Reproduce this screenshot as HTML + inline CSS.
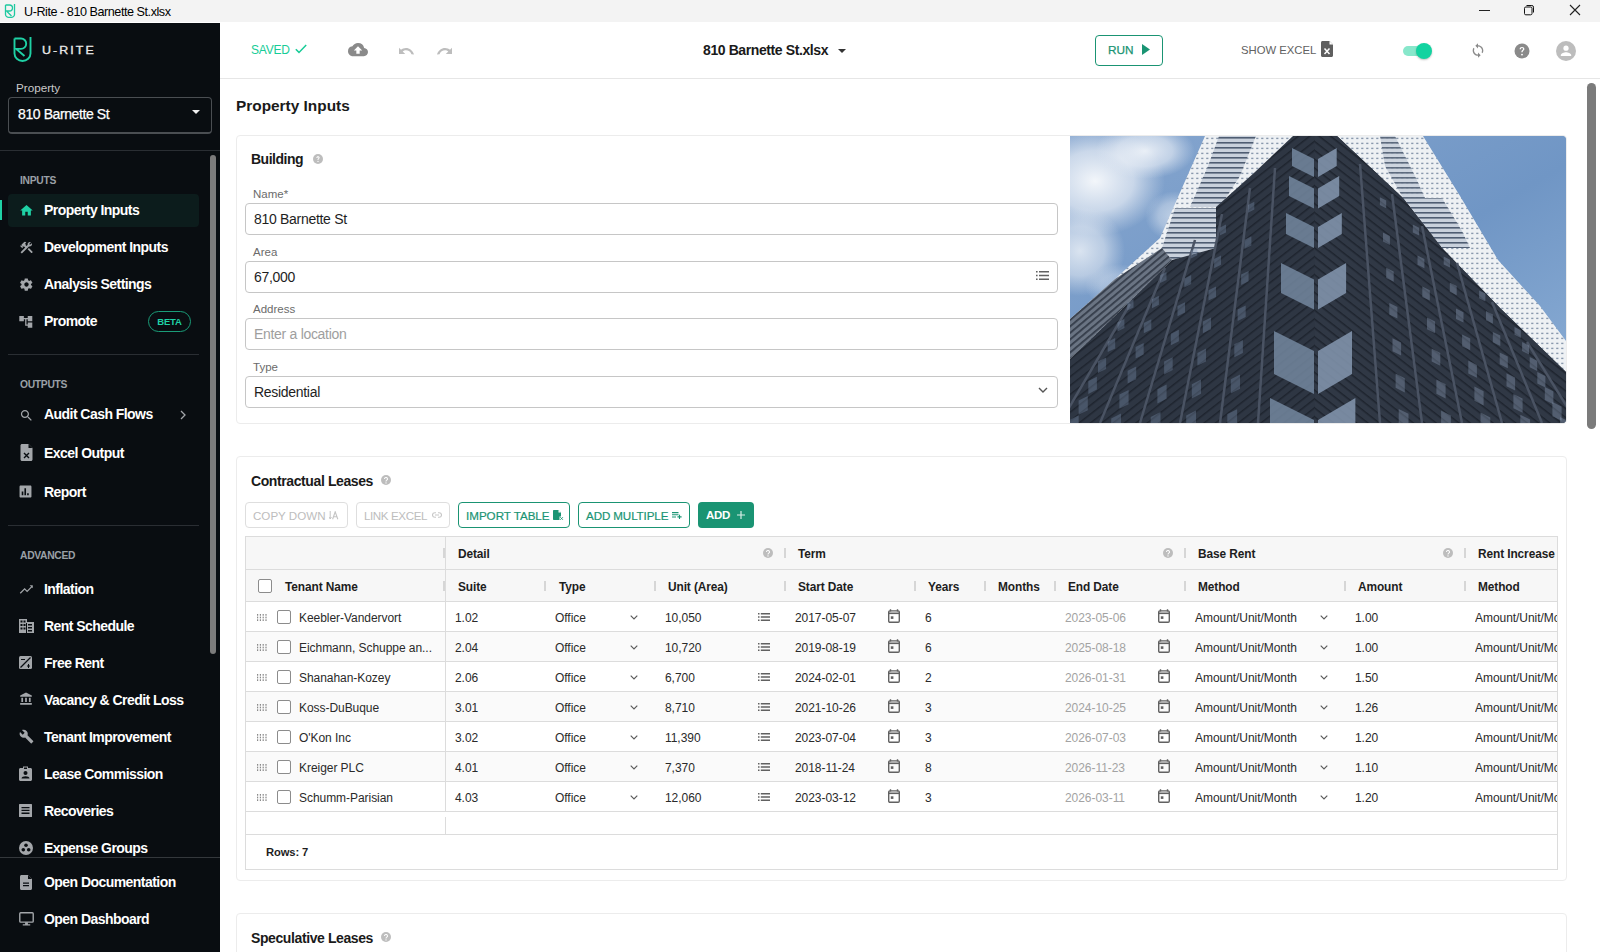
<!DOCTYPE html>
<html><head><meta charset="utf-8">
<style>
*{box-sizing:border-box;margin:0;padding:0}
html,body{width:1600px;height:952px;overflow:hidden;background:#fff;font-family:"Liberation Sans",sans-serif;color:#1e1e1e}
.abs{position:absolute}
#title{position:absolute;left:0;top:0;width:1600px;height:22px;background:#f3f3f3}
#title .t{position:absolute;left:24px;top:5px;font-size:12.6px;line-height:14px;color:#000;letter-spacing:-0.45px}
#side{position:absolute;left:0;top:23px;width:220px;height:929px;background:#090d11;overflow:hidden}
#main{position:absolute;left:220px;top:22px;width:1380px;height:930px;background:#fff;overflow:hidden}
.nav{position:absolute;left:44px;font-size:14px;line-height:16px;font-weight:bold;color:#fff;white-space:nowrap;letter-spacing:-0.55px;margin-top:0px}
.ico{position:absolute;left:19px;width:15px;height:15px}
.sec{position:absolute;left:20px;font-size:10.3px;line-height:12px;color:#9aa0a6;font-weight:bold;letter-spacing:-0.3px}
.lbl{position:absolute;left:253px;font-size:11.5px;line-height:13px;color:#6b6b6b}
.inp{position:absolute;left:245px;width:813px;height:32px;border:1px solid #c6c6c6;border-radius:4px}
.itx{position:absolute;left:254px;font-size:14px;line-height:16px;color:#1e1e1e;letter-spacing:-0.3px}
.btn{position:absolute;top:502px;height:26px;border:1px solid;border-radius:4px;font-size:11.6px;line-height:25px;padding-left:7px;letter-spacing:0px;white-space:nowrap}
.hl{position:absolute;left:245px;width:1312px;height:1px;background:#dcdcdc}
.rh{position:absolute;width:2px;height:10px;background:#d6d6d6}
.th{position:absolute;font-size:11.9px;line-height:13px;font-weight:bold;color:#1e1e1e;letter-spacing:-0.1px;white-space:nowrap}
.td{position:absolute;font-size:12px;line-height:13px;color:#2a2a2a;letter-spacing:-0.05px;white-space:nowrap}
.cb{position:absolute;width:14px;height:14px;border:1.5px solid #8c8c8c;border-radius:2px;background:#fff}
.div{position:absolute;height:1px;background:#2a2e33}
</style></head><body>
<svg width="0" height="0" style="position:absolute">
<defs>
<g id="qm"><circle cx="8" cy="8" r="8" fill="#bdbdbd"/><path d="M5.6 6.3A2.4 2.3 0 1 1 9.2 8.2C8.3 8.7 8 9.1 8 10.2" fill="none" stroke="#fff" stroke-width="1.7"/><circle cx="8" cy="12.6" r="1.1" fill="#fff"/></g>
<g id="dh" fill="#8a8a8a"><rect x="0" y="0" width="1.2" height="1.7"/><rect x="2.8" y="0" width="1.2" height="1.7"/><rect x="5.6" y="0" width="1.2" height="1.7"/><rect x="8.4" y="0" width="1.2" height="1.7"/><rect x="0" y="2.65" width="1.2" height="1.7"/><rect x="2.8" y="2.65" width="1.2" height="1.7"/><rect x="5.6" y="2.65" width="1.2" height="1.7"/><rect x="8.4" y="2.65" width="1.2" height="1.7"/><rect x="0" y="5.3" width="1.2" height="1.7"/><rect x="2.8" y="5.3" width="1.2" height="1.7"/><rect x="5.6" y="5.3" width="1.2" height="1.7"/><rect x="8.4" y="5.3" width="1.2" height="1.7"/></g>
<g id="chev"><path d="M.7.7L4 4 7.3.7" fill="none" stroke="#5a5a5a" stroke-width="1.15"/></g>
<g id="lst" fill="#616161"><path d="M0 0h1.5v1.4H0zM0 3.3h1.5v1.4H0zM0 6.6h1.5v1.4H0zM2.8 0H12v1.4H2.8zM2.8 3.3H12v1.4H2.8zM2.8 6.6H12v1.4H2.8z"/></g>
<g id="cal"><path d="M2.5 0.3v2.2M9.5 0.3v2.2" stroke="#616161" stroke-width="1.4"/><rect x="0.7" y="1.9" width="10.6" height="11.4" rx="1.2" fill="none" stroke="#616161" stroke-width="1.4"/><path d="M0.7 3.5h10.6v1.6H0.7z" fill="#616161"/><rect x="2.8" y="7.3" width="2.6" height="2.6" fill="#616161"/></g>
</defs></svg>

<div id="title">
  <svg class="abs" style="left:4px;top:3px" width="12" height="15" viewBox="0 0 12 15"><path d="M1.5 2v9.5a4.5 3 0 0 0 4.5 3a4.5 3 0 0 0 4.5-3V1" fill="none" stroke="#1fc9a0" stroke-width="1.3"/><path d="M1.5 2h4a3 3 0 0 1 0 6h-3l5 5" fill="none" stroke="#1fc9a0" stroke-width="1.3"/></svg>
  <div class="t">U-Rite - 810 Barnette St.xlsx</div>
  <div class="abs" style="left:1479px;top:10px;width:11px;height:1px;background:#222"></div>
  <svg class="abs" style="left:1520px;top:2px" width="16" height="16" viewBox="0 0 16 16"><rect x="4.5" y="5" width="7.5" height="7.8" rx="1.3" fill="none" stroke="#111" stroke-width="1"/><path d="M6.5 3.5H11.8A1.7 1.7 0 0 1 13.5 5.2V10.5" fill="none" stroke="#111" stroke-width="1"/></svg>
  <svg class="abs" style="left:1569px;top:4px" width="12" height="12" viewBox="0 0 12 12"><path d="M1 1L11 11M11 1L1 11" stroke="#222" stroke-width="1.1"/></svg>
</div>

<div id="side"></div>
<!-- sidebar content -->
<svg class="abs" style="left:13px;top:36px" width="20" height="26" viewBox="0 0 20 26"><path d="M1.5 2.5V17.5A8 7.5 0 0 0 17.5 17.5V1" fill="none" stroke="#1fd1a5" stroke-width="1.9"/><path d="M1.5 2.5H8A5.2 5.2 0 0 1 8 12.9H3.2L11.5 20" fill="none" stroke="#1fd1a5" stroke-width="1.9"/></svg>
<div class="abs" style="left:42px;top:45px;font-size:10.2px;line-height:11px;font-weight:normal;letter-spacing:1.7px;color:#e8e8e8;-webkit-text-stroke:0.3px #e8e8e8;transform:scaleX(1.22);transform-origin:0 0">U-RITE</div>
<div class="abs" style="left:16px;top:81px;font-size:11.7px;line-height:14px;color:#c9c9c9">Property</div>
<div class="abs" style="left:8px;top:97px;width:204px;height:37px;border:1px solid #4a4e52;border-bottom-width:2px;border-radius:4px"></div>
<div class="abs" style="left:18px;top:106px;font-size:14px;line-height:16px;color:#fff;-webkit-text-stroke:0.25px #fff;letter-spacing:-0.4px">810 Barnette St</div>
<div class="abs" style="left:192px;top:110px;width:0;height:0;border-left:4.2px solid transparent;border-right:4.2px solid transparent;border-top:4.2px solid #f0f0f0"></div>
<div class="div" style="left:0;top:150px;width:220px"></div>
<div class="abs" style="left:210px;top:155px;width:6px;height:499px;border-radius:3px;background:#7b7b7b"></div>

<div class="sec" style="top:175px">INPUTS</div>
<div class="abs" style="left:8px;top:194px;width:191px;height:33px;border-radius:4px;background:#0c1c1c"></div>
<div class="abs" style="left:0;top:200px;width:2px;height:20px;background:#1fd1a5"></div>
<svg class="ico" style="top:203px" viewBox="0 0 24 24"><path d="M10 20v-6h4v6h5v-8h3L12 3 2 12h3v8z" fill="#1fd1a5"/></svg>
<div class="nav" style="top:202px">Property Inputs</div>

<svg class="ico" style="top:240px" viewBox="0 0 24 24"><path d="M21.7 18.6l-5.8-5.8-2.1 2.1 5.8 5.8c.3.3.8.3 1.1 0l1-1c.3-.3.3-.8 0-1.1zM17.3 10.1c1.9 0 3.5-1.6 3.5-3.5 0-.6-.2-1.1-.4-1.6l-2.7 2.7-1.5-1.5 2.7-2.7c-.5-.2-1-.4-1.6-.4-1.9 0-3.5 1.6-3.5 3.5 0 .4.1.8.2 1.1l-1.9 1.9L10.3 8l.7-.7-1.4-1.4 2.1-2.1c-1.2-1.2-3.1-1.2-4.2 0L3.9 7.4l1.4 1.4H2.5l-.7.7 3.5 3.5.7-.7V9.5l1.4 1.4.7-.7 1.8 1.8-7.4 7.4 2.1 2.1L16 10.3c.4.1.9.2 1.3.2z" fill="#a3a6aa"/></svg>
<div class="nav" style="top:239px">Development Inputs</div>

<svg class="ico" style="top:277px" viewBox="0 0 24 24"><path d="M19.1 12.9c0-.3.1-.6.1-.9s0-.6-.1-.9l2.1-1.6c.2-.1.2-.4.1-.6l-2-3.5c-.1-.2-.4-.3-.6-.2l-2.5 1c-.5-.4-1.1-.7-1.7-1l-.4-2.6c0-.2-.2-.4-.5-.4h-4c-.2 0-.4.2-.5.4l-.4 2.6c-.6.3-1.2.6-1.7 1l-2.5-1c-.2-.1-.5 0-.6.2l-2 3.5c-.1.2-.1.5.1.6l2.1 1.6c0 .3-.1.6-.1.9s0 .6.1.9l-2.1 1.6c-.2.2-.2.4-.1.6l2 3.5c.1.2.4.3.6.2l2.5-1c.5.4 1.1.7 1.7 1l.4 2.6c0 .2.2.4.5.4h4c.2 0 .5-.2.5-.4l.4-2.6c.6-.3 1.2-.6 1.7-1l2.5 1c.2.1.5 0 .6-.2l2-3.5c.1-.2.1-.5-.1-.6l-2.1-1.6zM12 15.5c-1.9 0-3.5-1.6-3.5-3.5s1.6-3.5 3.5-3.5 3.5 1.6 3.5 3.5-1.6 3.5-3.5 3.5z" fill="#a3a6aa"/></svg>
<div class="nav" style="top:276px">Analysis Settings</div>

<svg class="ico" style="top:314px;left:18px;width:15.6px;height:15.6px" viewBox="0 0 24 24"><path d="M22 11V3h-7v3H9V3H2v8h7V8h2v10h4v3h7v-8h-7v3h-2V8h2v3z" fill="#a3a6aa"/></svg>
<div class="nav" style="top:313px">Promote</div>
<div class="abs" style="left:148px;top:311px;width:43px;height:21px;border:1px solid #1a9c78;border-radius:11px;color:#1fd1a5;font-size:9.5px;font-weight:bold;line-height:19px;text-align:center;letter-spacing:-0.2px">BETA</div>

<div class="div" style="left:8px;top:354px;width:191px"></div>
<div class="sec" style="top:379px">OUTPUTS</div>
<svg class="ico" style="top:408px" viewBox="0 0 24 24"><path d="M15.5 14h-.8l-.3-.3c1-1.1 1.6-2.6 1.6-4.2C16 5.9 13.1 3 9.5 3S3 5.9 3 9.5 5.9 16 9.5 16c1.6 0 3.1-.6 4.2-1.6l.3.3v.8l5 5 1.5-1.5-5-5zm-6 0C7 14 5 12 5 9.5S7 5 9.5 5 14 7 14 9.5 12 14 9.5 14z" fill="#a3a6aa"/></svg>
<div class="nav" style="top:406px">Audit Cash Flows</div>
<svg class="abs" style="left:179px;top:410px" width="8" height="10" viewBox="0 0 8 10"><path d="M2 1l4 4-4 4" fill="none" stroke="#a3a6aa" stroke-width="1.3"/></svg>

<svg class="ico" style="top:444px;height:17px" viewBox="0 0 12 17"><path d="M1.5 0H8l4 4v11.5c0 .8-.7 1.5-1.5 1.5h-9C.7 17 0 16.3 0 15.5v-14C0 .7.7 0 1.5 0z" fill="#a3a6aa"/><path d="M8 0v4h4" fill="#090d11"/><path d="M3.5 9l5 5M8.5 9l-5 5" stroke="#090d11" stroke-width="1.4"/></svg>
<div class="nav" style="top:445px">Excel Output</div>

<svg class="ico" style="top:485px;width:13px;height:13px" viewBox="0 0 24 24"><path d="M21 1H3C2 1 1 2 1 3v18c0 1 1 2 2 2h18c1 0 2-1 2-2V3c0-1-1-2-2-2zM8 19H5v-7h3v7zm5 0h-3V6h3v13zm5 0h-3v-4h3v4z" fill="#a3a6aa"/></svg>
<div class="nav" style="top:484px">Report</div>

<div class="div" style="left:8px;top:525px;width:191px"></div>
<div class="sec" style="top:550px">ADVANCED</div>
<svg class="ico" style="top:582px" viewBox="0 0 24 24"><path d="M2 18l7-7 4 4 8-8" fill="none" stroke="#a3a6aa" stroke-width="2"/><path d="M15 6h7v7" fill="none" stroke="#a3a6aa" stroke-width="0"/><path d="M17 5h5v5z" fill="#a3a6aa"/></svg>
<div class="nav" style="top:581px">Inflation</div>
<svg class="ico" style="top:619px;width:15px;height:14px" viewBox="0 0 15 14"><path d="M0 0h8v3h7v11H0z" fill="#a3a6aa"/><path d="M1.5 1.5h2v2h-2zM4.5 1.5h2v2h-2zM1.5 5h2v2h-2zM4.5 5h2v2h-2zM1.5 8.5h2v2h-2zM4.5 8.5h2v2h-2zM9 5h4v1.5H9zM9 8h4v1.5H9zM9 11h4v1.5H9zM7 4h1v10H7z" fill="#090d11"/></svg>
<div class="nav" style="top:618px">Rent Schedule</div>
<svg class="ico" style="top:656px;width:13px;height:13px" viewBox="0 0 13 13"><rect width="13" height="13" rx="1.5" fill="#a3a6aa"/><path d="M1.5 11.5L11.5 1.5" stroke="#090d11" stroke-width="1.3"/><path d="M2 3h4v1H2zM8 9.5h3v1H8zM9 8h1v4H9z" fill="#090d11"/></svg>
<div class="nav" style="top:655px">Free Rent</div>
<svg class="ico" style="top:692px;width:14px;height:14px" viewBox="0 0 24 24"><path d="M4 10h3v7H4zM10.5 10h3v7h-3zM2 19h20v3H2zM17 10h3v7h-3zM12 1L2 6v2h20V6z" fill="#a3a6aa"/></svg>
<div class="nav" style="top:692px">Vacancy &amp; Credit Loss</div>
<svg class="ico" style="top:729px" viewBox="0 0 24 24"><path d="M22.7 19l-9.1-9.1c.9-2.3.4-5-1.5-6.9-2-2-5-2.4-7.4-1.3L9 6 6 9 1.6 4.7C.4 7.1.9 10.1 2.9 12.1c1.9 1.9 4.6 2.4 6.9 1.5l9.1 9.1c.4.4 1 .4 1.4 0l2.3-2.3c.5-.4.5-1.1.1-1.4z" fill="#a3a6aa"/></svg>
<div class="nav" style="top:729px">Tenant Improvement</div>
<svg class="ico" style="top:766px;width:13px;height:15px" viewBox="0 0 13 15"><path d="M1.5 2H4V.5h5V2h2.5c.8 0 1.5.7 1.5 1.5v10c0 .8-.7 1.5-1.5 1.5h-10C.7 15 0 14.3 0 13.5v-10C0 2.7.7 2 1.5 2z" fill="#a3a6aa"/><circle cx="6.5" cy="7" r="2" fill="#090d11"/><path d="M2.5 12.5c0-1.5 2-2.3 4-2.3s4 .8 4 2.3z" fill="#090d11"/><path d="M5 1.5h3v1.5H5z" fill="#090d11"/></svg>
<div class="nav" style="top:766px">Lease Commission</div>
<svg class="ico" style="top:804px;width:13px;height:13px" viewBox="0 0 13 13"><rect width="13" height="13" rx="0.5" fill="#a3a6aa"/><path d="M2.5 3h8v1.3h-8zM2.5 5.8h8v1.3h-8zM2.5 8.6h8v1.3h-8z" fill="#090d11"/></svg>
<div class="nav" style="top:803px">Recoveries</div>
<svg class="ico" style="top:841px;width:14px;height:14px" viewBox="0 0 14 14"><circle cx="7" cy="7" r="7" fill="#a3a6aa"/><circle cx="7" cy="4.2" r="1.8" fill="#090d11"/><circle cx="4.3" cy="8.8" r="1.8" fill="#090d11"/><circle cx="9.7" cy="8.8" r="1.8" fill="#090d11"/></svg>
<div class="nav" style="top:840px">Expense Groups</div>
<div class="abs" style="left:0;top:857px;width:220px;height:95px;background:#090d11"></div>
<div class="div" style="left:0;top:857px;width:220px;background:#34383c"></div>
<svg class="ico" style="top:875px;left:20px;width:12px;height:15px" viewBox="0 0 12 15"><path d="M1.5 0H8l4 4v9.5c0 .8-.7 1.5-1.5 1.5h-9C.7 15 0 14.3 0 13.5v-12C0 .7.7 0 1.5 0z" fill="#a3a6aa"/><path d="M8 0v4h4z" fill="#090d11"/><path d="M3 7.5h6v1.2H3zM3 10h6v1.2H3z" fill="#090d11"/></svg>
<div class="nav" style="top:874px">Open Documentation</div>
<svg class="ico" style="top:912px;width:15px;height:14px;left:18.5px" viewBox="0 0 16 15"><rect x="0.8" y="0.8" width="14.4" height="10" rx="1" fill="none" stroke="#a3a6aa" stroke-width="1.5"/><path d="M6.5 11h3v2h-3zM4 13h8v1.5H4z" fill="#a3a6aa"/></svg>
<div class="nav" style="top:911px">Open Dashboard</div>

<div id="main"></div>
<!-- topbar -->
<div class="abs" style="left:220px;top:78px;width:1380px;height:1px;background:#e6e6e6"></div>
<div class="abs" style="left:251px;top:44px;font-size:12px;line-height:13px;color:#17cc97;letter-spacing:-0.2px">SAVED</div>
<svg class="abs" style="left:295px;top:44px" width="12" height="10" viewBox="0 0 12 10"><path d="M0.8 5.2L4 8.4 11.2 1" fill="none" stroke="#17cc97" stroke-width="1.5"/></svg>
<svg class="abs" style="left:348px;top:42px" width="20" height="16" viewBox="0 0 24 19"><path d="M19.35 7.04A7.49 7.49 0 0 0 12 1C9.11 1 6.6 2.64 5.35 5.04A5.994 5.994 0 0 0 0 11c0 3.31 2.69 6 6 6h13c2.76 0 5-2.24 5-5 0-2.64-2.05-4.78-4.65-4.96zM14 10v4h-4v-4H7l5-5 5 5h-3z" fill="#8a8a8a"/></svg>
<svg class="abs" style="left:398px;top:45px" width="17" height="10" viewBox="0 0 17 10"><path d="M16 9.5C14.8 5.5 11.5 3 8 3 6 3 4.3 3.7 3 4.8L1 2.8V9h6.2L4.7 6.5C5.6 5.8 6.8 5.3 8 5.3c2.4 0 4.6 1.6 5.5 4z" fill="#bdbdbd"/></svg>
<svg class="abs" style="left:436px;top:45px" width="17" height="10" viewBox="0 0 17 10"><path d="M1 9.5C2.2 5.5 5.5 3 9 3c2 0 3.7.7 5 1.8l2-2V9H9.8l2.5-2.5C11.4 5.8 10.2 5.3 9 5.3 6.6 5.3 4.4 6.9 3.5 9.3z" fill="#bdbdbd"/></svg>

<div class="abs" style="left:703px;top:42px;font-size:14px;line-height:16px;font-weight:bold;color:#1a1a1a;letter-spacing:-0.4px">810 Barnette St.xlsx</div>
<div class="abs" style="left:838px;top:49px;width:0;height:0;border-left:4.5px solid transparent;border-right:4.5px solid transparent;border-top:4.5px solid #333"></div>

<div class="abs" style="left:1095px;top:35px;width:68px;height:31px;border:1.5px solid #1a9473;border-radius:4px"></div>
<div class="abs" style="left:1108px;top:44px;font-size:11.8px;line-height:13px;color:#1a9473;-webkit-text-stroke:0.25px #1a9473">RUN</div>
<svg class="abs" style="left:1142px;top:44px" width="8" height="11" viewBox="0 0 8 11"><path d="M0 0L8 5.5 0 11z" fill="#1a9473"/></svg>

<div class="abs" style="left:1241px;top:44px;font-size:11.3px;line-height:13px;color:#616161">SHOW EXCEL</div>
<svg class="abs" style="left:1321px;top:41px" width="12" height="16" viewBox="0 0 12 16"><path d="M1.5 0H8.5L12 3.5V14.5C12 15.3 11.3 16 10.5 16H1.5C.7 16 0 15.3 0 14.5V1.5C0 .7.7 0 1.5 0z" fill="#5f5f5f"/><path d="M8.5 0V3.5H12z" fill="#fff"/><path d="M3.5 7.5L8.5 13M8.5 7.5L3.5 13" stroke="#fff" stroke-width="1.5"/></svg>

<div class="abs" style="left:1403px;top:46px;width:24px;height:10px;border-radius:5px;background:#88e7cb"></div>
<div class="abs" style="left:1416px;top:43px;width:16px;height:16px;border-radius:50%;background:#12d3a0;box-shadow:0 1px 2px rgba(0,0,0,.25)"></div>
<svg class="abs" style="left:1470px;top:42px" width="16" height="17" viewBox="0 0 24 24"><path d="M12 4V1L8 5l4 4V6c3.31 0 6 2.69 6 6 0 1.01-.25 1.97-.7 2.8l1.46 1.46A7.93 7.93 0 0 0 20 12c0-4.42-3.58-8-8-8zm0 14c-3.31 0-6-2.69-6-6 0-1.01.25-1.97.7-2.8L5.24 7.74A7.93 7.93 0 0 0 4 12c0 4.42 3.58 8 8 8v3l4-4-4-4v3z" fill="#8a8a8a"/></svg>
<svg class="abs" style="left:1514px;top:43px" width="16" height="16" viewBox="0 0 16 16"><circle cx="8" cy="8" r="7.5" fill="#8a8a8a"/><path d="M5.6 6.2c0-1.4 1.1-2.3 2.4-2.3s2.4.9 2.4 2.1c0 1.5-1.8 1.7-1.8 3.3H7.3c0-2 1.7-2.1 1.7-3.2 0-.6-.4-1-1-1s-1 .4-1 1.1z" fill="#fff"/><circle cx="8" cy="11.6" r="0.95" fill="#fff"/></svg>
<svg class="abs" style="left:1556px;top:41px" width="20" height="20" viewBox="0 0 20 20"><circle cx="10" cy="10" r="10" fill="#bdbdbd"/><circle cx="10" cy="7.2" r="2.6" fill="#fff"/><path d="M4.8 14.2c0-1.9 3.4-2.9 5.2-2.9s5.2 1 5.2 2.9v.9H4.8z" fill="#fff"/></svg>

<div class="abs" style="left:1587px;top:83px;width:9px;height:346px;border-radius:4.5px;background:#7b7b7b"></div>

<!-- Property inputs heading -->
<div class="abs" style="left:236px;top:97px;font-size:15.4px;line-height:17px;font-weight:bold;color:#1a1a1a">Property Inputs</div>

<!-- Building card -->
<div class="abs" style="left:236px;top:135px;width:1331px;height:289px;border:1px solid #ececec;border-radius:4px"></div>
<div class="abs" style="left:251px;top:151px;font-size:14px;line-height:16px;font-weight:bold;color:#1a1a1a;letter-spacing:-0.5px">Building</div>
<svg class="abs" style="left:313px;top:154px" width="10" height="10" viewBox="0 0 16 16"><circle cx="8" cy="8" r="8" fill="#bdbdbd"/><path d="M5.4 6.2c0-1.5 1.2-2.5 2.6-2.5s2.6 1 2.6 2.3c0 1.6-1.9 1.8-1.9 3.5H7.2c0-2.1 1.8-2.2 1.8-3.4 0-.6-.4-1-1-1s-1 .4-1 1.1z" fill="#fff"/><circle cx="8" cy="11.8" r="1.05" fill="#fff"/></svg>

<div class="lbl" style="top:188px">Name*</div>
<div class="inp" style="top:203px"></div>
<div class="itx" style="top:211px">810 Barnette St</div>
<div class="lbl" style="top:246px">Area</div>
<div class="inp" style="top:261px"></div>
<div class="itx" style="top:269px">67,000</div>
<svg class="abs" style="left:1036px;top:271px" width="13" height="9" viewBox="0 0 13 9"><path d="M0 0h1.6v1.4H0zM0 3.8h1.6v1.4H0zM0 7.6h1.6v1.4H0zM3 0h10v1.4H3zM3 3.8h10v1.4H3zM3 7.6h10v1.4H3z" fill="#616161"/></svg>
<div class="lbl" style="top:303px">Address</div>
<div class="inp" style="top:318px"></div>
<div class="itx" style="top:326px;color:#9e9e9e">Enter a location</div>
<div class="lbl" style="top:361px">Type</div>
<div class="inp" style="top:376px"></div>
<div class="itx" style="top:384px">Residential</div>
<svg class="abs" style="left:1038px;top:387px" width="10" height="7" viewBox="0 0 10 7"><path d="M1 1l4 4 4-4" fill="none" stroke="#555" stroke-width="1.4"/></svg>

<div id="photo" class="abs" style="left:1070px;top:136px;width:496px;height:287px;border-radius:0 4px 4px 0;overflow:hidden;background:#7599c6">
<svg width="496" height="287" viewBox="0 0 496 287" style="display:block">
<defs>
<linearGradient id="sky" x1="0" y1="0" x2="1" y2="1"><stop offset="0" stop-color="#86a6cf"/><stop offset="0.55" stop-color="#7096c5"/><stop offset="1" stop-color="#8dafd6"/></linearGradient>
<radialGradient id="cl1" cx="0.5" cy="0.5" r="0.5"><stop offset="0" stop-color="#ffffff" stop-opacity="0.95"/><stop offset="0.55" stop-color="#eef2f8" stop-opacity="0.7"/><stop offset="1" stop-color="#dfe7f2" stop-opacity="0"/></radialGradient>
<pattern id="twp" width="5" height="5" patternUnits="userSpaceOnUse"><rect width="5" height="5" fill="#eef1f4"/><rect x="1.2" y="1.7" width="2.2" height="1.4" fill="#8a99ae"/></pattern>
<pattern id="rcp" width="6" height="5" patternUnits="userSpaceOnUse"><rect width="6" height="5" fill="#c9d1dc"/><rect x="0" y="1" width="6" height="1.6" fill="#4f5d72"/></pattern>
<pattern id="shp" width="5" height="5" patternUnits="userSpaceOnUse" patternTransform="rotate(-40)"><rect width="5" height="5" fill="#6a7483"/><rect x="0" y="0" width="5" height="1.8" fill="#343c49"/></pattern>
<pattern id="dkp" width="7" height="7" patternUnits="userSpaceOnUse" patternTransform="rotate(-38)"><rect width="7" height="7" fill="#2e3643"/><rect x="0" y="0" width="7" height="1.5" fill="#1e242e"/></pattern>
<pattern id="dkp2" width="7" height="7" patternUnits="userSpaceOnUse" patternTransform="rotate(38)"><rect width="7" height="7" fill="#303845"/><rect x="0" y="0" width="7" height="1.5" fill="#1e242e"/></pattern>
</defs>
<rect width="496" height="287" fill="url(#sky)"/>
<ellipse cx="25" cy="45" rx="70" ry="55" fill="url(#cl1)" opacity="0.95"/>
<ellipse cx="75" cy="15" rx="50" ry="28" fill="url(#cl1)" opacity="0.85"/>
<ellipse cx="10" cy="115" rx="45" ry="45" fill="url(#cl1)" opacity="0.75"/>
<ellipse cx="105" cy="80" rx="30" ry="25" fill="url(#cl1)" opacity="0.55"/>
<ellipse cx="50" cy="150" rx="35" ry="22" fill="url(#cl1)" opacity="0.45"/>
<path d="M135 0H353L390 60 428 124 470 170 496 205V287H0V183L45 143 90 102 112 52z" fill="url(#twp)"/>
<path d="M149 0H186L170 40 150 71 120 71 138 30z" fill="url(#rcp)"/>
<path d="M310 0H325L345 40 355 62 333 62 315 30z" fill="url(#rcp)" opacity="0.9"/>
<path d="M105 72H146L146 112 102 124 92 112z" fill="url(#rcp)"/>
<path d="M333 62H372L392 95 400 112 372 112z" fill="url(#rcp)"/>
<path d="M0 183L45 143 92 112 102 124 50 175 0 223z" fill="url(#shp)"/>
<path d="M223 0H267L300 31 333 62 372 112 430 172 496 236V287H0V223L50 175 102 124 146 112 146 71 185 36z" fill="url(#dkp)"/>
<path d="M245 0H267L300 31 333 62 372 112 430 172 496 236V287H245z" fill="url(#dkp2)"/>
<path d="M244 23.0L222.0 12.0V30.0L244 41.0z" fill="#73879f" opacity="0.85"/>
<path d="M248 23.0L266.7 12.0V30.0L248 41.0z" fill="#8598b0" opacity="0.85"/>
<path d="M244 52.5L219.0 40.0V60.0L244 72.5z" fill="#73879f" opacity="0.85"/>
<path d="M248 52.5L269.2 40.0V60.0L248 72.5z" fill="#8598b0" opacity="0.85"/>
<path d="M244 91.0L216.0 77.0V98.0L244 112.0z" fill="#73879f" opacity="0.85"/>
<path d="M248 91.0L271.8 77.0V98.0L248 112.0z" fill="#8598b0" opacity="0.85"/>
<path d="M244 143.5L211.0 127.0V157.0L244 173.5z" fill="#73879f" opacity="0.85"/>
<path d="M248 143.5L276.1 127.0V157.0L248 173.5z" fill="#8598b0" opacity="0.85"/>
<path d="M244 215.0L204.0 195.0V238.0L244 258.0z" fill="#73879f" opacity="0.85"/>
<path d="M248 215.0L282.0 195.0V238.0L248 258.0z" fill="#8598b0" opacity="0.85"/>
<path d="M244 284.0L200.0 262.0V300.0L244 322.0z" fill="#73879f" opacity="0.85"/>
<path d="M248 284.0L285.4 262.0V300.0L248 322.0z" fill="#8598b0" opacity="0.85"/>
<path d="M205 32L188 287" stroke="#4a5363" stroke-width="2.5"/>
<path d="M180 52L150 287" stroke="#4a5363" stroke-width="2.5"/>
<path d="M152 78L110 287" stroke="#4a5363" stroke-width="2.5"/>
<path d="M125 104L70 287" stroke="#4a5363" stroke-width="2.5"/>
<path d="M95 132L30 287" stroke="#4a5363" stroke-width="2.5"/>
<path d="M60 168L-10 287" stroke="#4a5363" stroke-width="2.5"/>
<path d="M290 28L310 287" stroke="#4a5363" stroke-width="2.5"/>
<path d="M322 58L352 287" stroke="#4a5363" stroke-width="2.5"/>
<path d="M352 90L392 287" stroke="#4a5363" stroke-width="2.5"/>
<path d="M387 127L432 287" stroke="#4a5363" stroke-width="2.5"/>
<path d="M422 166L472 287" stroke="#4a5363" stroke-width="2.5"/>
<path d="M457 206L507 287" stroke="#4a5363" stroke-width="2.5"/>
<path d="M184.3 65.7l-6.3 3.2v7.8l6.3 -3.2z" fill="#8499b6" opacity="0.33"/>
<path d="M181.4 100.3l-6.9 3.5v9.1l6.9 -3.5z" fill="#8499b6" opacity="0.33"/>
<path d="M178.6 134.9l-7.5 3.7v10.3l7.5 -3.7z" fill="#8499b6" opacity="0.33"/>
<path d="M175.7 169.5l-8.1 4.0v11.6l8.1 -4.0z" fill="#8499b6" opacity="0.33"/>
<path d="M172.9 204.0l-8.6 4.3v12.9l8.6 -4.3z" fill="#8499b6" opacity="0.33"/>
<path d="M170.0 238.6l-9.2 4.6v14.2l9.2 -4.6z" fill="#8499b6" opacity="0.33"/>
<path d="M167.1 273.2l-9.8 4.9v15.5l9.8 -4.9z" fill="#8499b6" opacity="0.33"/>
<path d="M156.0 88.6l-6.3 3.2v7.8l6.3 -3.2z" fill="#8499b6" opacity="0.33"/>
<path d="M151.0 119.6l-6.9 3.5v9.1l6.9 -3.5z" fill="#8499b6" opacity="0.33"/>
<path d="M146.0 150.6l-7.5 3.7v10.3l7.5 -3.7z" fill="#8499b6" opacity="0.33"/>
<path d="M141.0 181.6l-8.1 4.0v11.6l8.1 -4.0z" fill="#8499b6" opacity="0.33"/>
<path d="M136.0 212.6l-8.6 4.3v12.9l8.6 -4.3z" fill="#8499b6" opacity="0.33"/>
<path d="M131.0 243.6l-9.2 4.6v14.2l9.2 -4.6z" fill="#8499b6" opacity="0.33"/>
<path d="M126.0 274.6l-9.8 4.9v15.5l9.8 -4.9z" fill="#8499b6" opacity="0.33"/>
<path d="M127.3 111.5l-6.3 3.2v7.8l6.3 -3.2z" fill="#8499b6" opacity="0.33"/>
<path d="M121.2 138.9l-6.9 3.5v9.1l6.9 -3.5z" fill="#8499b6" opacity="0.33"/>
<path d="M115.0 166.3l-7.5 3.7v10.3l7.5 -3.7z" fill="#8499b6" opacity="0.33"/>
<path d="M108.9 193.7l-8.1 4.0v11.6l8.1 -4.0z" fill="#8499b6" opacity="0.33"/>
<path d="M102.7 221.2l-8.6 4.3v12.9l8.6 -4.3z" fill="#8499b6" opacity="0.33"/>
<path d="M96.6 248.6l-9.2 4.6v14.2l9.2 -4.6z" fill="#8499b6" opacity="0.33"/>
<path d="M90.5 276.0l-9.8 4.9v15.5l9.8 -4.9z" fill="#8499b6" opacity="0.33"/>
<path d="M96.5 136.1l-6.3 3.2v7.8l6.3 -3.2z" fill="#8499b6" opacity="0.33"/>
<path d="M88.9 159.7l-6.9 3.5v9.1l6.9 -3.5z" fill="#8499b6" opacity="0.33"/>
<path d="M81.3 183.3l-7.5 3.7v10.3l7.5 -3.7z" fill="#8499b6" opacity="0.33"/>
<path d="M73.7 206.9l-8.1 4.0v11.6l8.1 -4.0z" fill="#8499b6" opacity="0.33"/>
<path d="M66.2 230.4l-8.6 4.3v12.9l8.6 -4.3z" fill="#8499b6" opacity="0.33"/>
<path d="M58.6 254.0l-9.2 4.6v14.2l9.2 -4.6z" fill="#8499b6" opacity="0.33"/>
<path d="M51.0 277.6l-9.8 4.9v15.5l9.8 -4.9z" fill="#8499b6" opacity="0.33"/>
<path d="M63.5 163.6l-6.3 3.2v7.8l6.3 -3.2z" fill="#8499b6" opacity="0.33"/>
<path d="M54.4 182.9l-6.9 3.5v9.1l6.9 -3.5z" fill="#8499b6" opacity="0.33"/>
<path d="M45.2 202.1l-7.5 3.7v10.3l7.5 -3.7z" fill="#8499b6" opacity="0.33"/>
<path d="M36.1 221.4l-8.1 4.0v11.6l8.1 -4.0z" fill="#8499b6" opacity="0.33"/>
<path d="M26.9 240.7l-8.6 4.3v12.9l8.6 -4.3z" fill="#8499b6" opacity="0.33"/>
<path d="M17.8 260.0l-9.2 4.6v14.2l9.2 -4.6z" fill="#8499b6" opacity="0.33"/>
<path d="M8.7 279.3l-9.8 4.9v15.5l9.8 -4.9z" fill="#8499b6" opacity="0.33"/>
<path d="M309.9 61.2l6.3 3.2v7.8l-6.3 -3.2z" fill="#9aaec9" opacity="0.33"/>
<path d="M313.0 96.5l6.9 3.5v9.1l-6.9 -3.5z" fill="#9aaec9" opacity="0.33"/>
<path d="M316.2 131.7l7.5 3.7v10.3l-7.5 -3.7z" fill="#9aaec9" opacity="0.33"/>
<path d="M319.3 167.0l8.1 4.0v11.6l-8.1 -4.0z" fill="#9aaec9" opacity="0.33"/>
<path d="M322.5 202.3l8.6 4.3v12.9l-8.6 -4.3z" fill="#9aaec9" opacity="0.33"/>
<path d="M325.6 237.6l9.2 4.6v14.2l-9.2 -4.6z" fill="#9aaec9" opacity="0.33"/>
<path d="M328.7 272.9l9.8 4.9v15.5l-9.8 -4.9z" fill="#9aaec9" opacity="0.33"/>
<path d="M342.8 88.6l6.3 3.2v7.8l-6.3 -3.2z" fill="#9aaec9" opacity="0.33"/>
<path d="M347.5 119.6l6.9 3.5v9.1l-6.9 -3.5z" fill="#9aaec9" opacity="0.33"/>
<path d="M352.3 150.6l7.5 3.7v10.3l-7.5 -3.7z" fill="#9aaec9" opacity="0.33"/>
<path d="M357.0 181.6l8.1 4.0v11.6l-8.1 -4.0z" fill="#9aaec9" opacity="0.33"/>
<path d="M361.7 212.6l8.6 4.3v12.9l-8.6 -4.3z" fill="#9aaec9" opacity="0.33"/>
<path d="M366.4 243.6l9.2 4.6v14.2l-9.2 -4.6z" fill="#9aaec9" opacity="0.33"/>
<path d="M371.1 274.6l9.8 4.9v15.5l-9.8 -4.9z" fill="#9aaec9" opacity="0.33"/>
<path d="M373.7 120.6l6.3 3.2v7.8l-6.3 -3.2z" fill="#9aaec9" opacity="0.33"/>
<path d="M379.8 146.6l6.9 3.5v9.1l-6.9 -3.5z" fill="#9aaec9" opacity="0.33"/>
<path d="M386.0 172.6l7.5 3.7v10.3l-7.5 -3.7z" fill="#9aaec9" opacity="0.33"/>
<path d="M392.1 198.6l8.1 4.0v11.6l-8.1 -4.0z" fill="#9aaec9" opacity="0.33"/>
<path d="M398.3 224.6l8.6 4.3v12.9l-8.6 -4.3z" fill="#9aaec9" opacity="0.33"/>
<path d="M404.4 250.6l9.2 4.6v14.2l-9.2 -4.6z" fill="#9aaec9" opacity="0.33"/>
<path d="M410.5 276.6l9.8 4.9v15.5l-9.8 -4.9z" fill="#9aaec9" opacity="0.33"/>
<path d="M409.1 154.4l6.3 3.2v7.8l-6.3 -3.2z" fill="#9aaec9" opacity="0.33"/>
<path d="M416.0 175.1l6.9 3.5v9.1l-6.9 -3.5z" fill="#9aaec9" opacity="0.33"/>
<path d="M422.8 195.9l7.5 3.7v10.3l-7.5 -3.7z" fill="#9aaec9" opacity="0.33"/>
<path d="M429.7 216.6l8.1 4.0v11.6l-8.1 -4.0z" fill="#9aaec9" opacity="0.33"/>
<path d="M436.5 237.3l8.6 4.3v12.9l-8.6 -4.3z" fill="#9aaec9" opacity="0.33"/>
<path d="M443.4 258.0l9.2 4.6v14.2l-9.2 -4.6z" fill="#9aaec9" opacity="0.33"/>
<path d="M450.3 278.7l9.8 4.9v15.5l-9.8 -4.9z" fill="#9aaec9" opacity="0.33"/>
<path d="M444.5 191.0l6.3 3.2v7.8l-6.3 -3.2z" fill="#9aaec9" opacity="0.33"/>
<path d="M452.1 206.0l6.9 3.5v9.1l-6.9 -3.5z" fill="#9aaec9" opacity="0.33"/>
<path d="M459.7 221.0l7.5 3.7v10.3l-7.5 -3.7z" fill="#9aaec9" opacity="0.33"/>
<path d="M467.3 236.0l8.1 4.0v11.6l-8.1 -4.0z" fill="#9aaec9" opacity="0.33"/>
<path d="M474.8 251.0l8.6 4.3v12.9l-8.6 -4.3z" fill="#9aaec9" opacity="0.33"/>
<path d="M482.4 266.0l9.2 4.6v14.2l-9.2 -4.6z" fill="#9aaec9" opacity="0.33"/>
<path d="M490.0 281.0l9.8 4.9v15.5l-9.8 -4.9z" fill="#9aaec9" opacity="0.33"/>
</svg></div>

<!-- Contractual leases card -->
<div class="abs" style="left:236px;top:456px;width:1331px;height:425px;border:1px solid #ececec;border-radius:4px"></div>
<div class="abs" style="left:251px;top:473px;font-size:14px;line-height:16px;font-weight:bold;color:#1a1a1a;letter-spacing:-0.4px">Contractual Leases</div>
<svg class="abs hq" style="left:381px;top:475px" width="10" height="10" viewBox="0 0 16 16"><use href="#qm"/></svg>
<div class="btn" style="left:245px;width:103px;border-color:#dedede;color:#bdbdbd">COPY DOWN</div>
<svg class="abs" style="left:329px;top:511px" width="10" height="9" viewBox="0 0 10 9"><path d="M1.2 0v7.2M0 6l1.2 2 1.2-2" fill="none" stroke="#c4c4c4" stroke-width="1"/><path d="M3.6 8.3L6.2 0.8 8.8 8.3M4.5 5.8h3.4" fill="none" stroke="#c4c4c4" stroke-width="1.1"/></svg>
<div class="btn" style="left:356px;width:94px;border-color:#dedede;color:#bdbdbd;letter-spacing:-0.4px">LINK EXCEL</div>
<svg class="abs" style="left:432px;top:512px" width="10" height="6" viewBox="0 0 10 6"><path d="M4 .7H2.8a2.3 2.3 0 0 0 0 4.6H4M6 .7h1.2a2.3 2.3 0 0 1 0 4.6H6M3 3h4" fill="none" stroke="#c8c8c8" stroke-width="1.1"/></svg>
<div class="btn" style="left:458px;width:112px;border-color:#1a9473;color:#1a9473;-webkit-text-stroke:0.2px #1a9473">IMPORT TABLE</div>
<svg class="abs" style="left:553px;top:510px" width="11" height="10" viewBox="0 0 11 10"><path d="M1 0H5.5L8 2.5V6.5H6.5V10H1C.4 10 0 9.6 0 9V1C0 .4.4 0 1 0z" fill="#1a9473"/><path d="M5.5 0V2.5H8z" fill="#fff"/><path d="M7.3 7.2l2.6 2.6M9.9 7.2l-2.6 2.6" stroke="#1a9473" stroke-width="0.9"/></svg>
<div class="btn" style="left:578px;width:112px;border-color:#1a9473;color:#1a9473;letter-spacing:-0.1px;-webkit-text-stroke:0.2px #1a9473">ADD MULTIPLE</div>
<svg class="abs" style="left:672px;top:512px" width="10" height="7" viewBox="0 0 10 7"><path d="M0 .6h6.5M0 2.8h6.5M0 5h4M7.5 2.8v4.2M5.4 4.9h4.2" fill="none" stroke="#1a9473" stroke-width="1.1"/></svg>
<div class="abs" style="left:698px;top:502px;width:56px;height:26px;border-radius:4px;background:#1a9473"></div>
<div class="abs" style="left:706px;top:509px;font-size:11.5px;line-height:13px;font-weight:bold;color:#fff;letter-spacing:-0.3px">ADD</div>
<svg class="abs" style="left:737px;top:511px" width="8" height="8" viewBox="0 0 8 8"><path d="M4 0v8M0 4h8" stroke="#d9efe8" stroke-width="1.2"/></svg>
<div class="abs" style="left:245px;top:536px;width:1313px;height:65px;background:#f7f7f7"></div>
<div class="abs" style="left:245px;top:631px;width:1313px;height:30px;background:#fafafa"></div>
<div class="abs" style="left:245px;top:691px;width:1313px;height:30px;background:#fafafa"></div>
<div class="abs" style="left:245px;top:751px;width:1313px;height:30px;background:#fafafa"></div>
<div class="abs" style="left:245px;top:536px;width:1313px;height:334px;border:1px solid #dcdcdc;border-right:none"></div>
<div class="abs" style="left:1557px;top:536px;width:1px;height:334px;background:#dcdcdc"></div>
<div class="hl" style="top:569px"></div>
<div class="hl" style="top:601px"></div>
<div class="hl" style="top:631px"></div>
<div class="hl" style="top:661px"></div>
<div class="hl" style="top:691px"></div>
<div class="hl" style="top:721px"></div>
<div class="hl" style="top:751px"></div>
<div class="hl" style="top:781px"></div>
<div class="hl" style="top:811px"></div>
<div class="hl" style="top:834px"></div>
<div class="abs" style="left:445px;top:536px;width:1px;height:275px;background:#dcdcdc"></div>
<div class="abs" style="left:445px;top:817px;width:1px;height:17px;background:#dcdcdc"></div>
<div class="rh" style="left:443px;top:548px"></div>
<div class="rh" style="left:784px;top:548px"></div>
<div class="rh" style="left:1184px;top:548px"></div>
<div class="rh" style="left:1464px;top:548px"></div>
<div class="rh" style="left:443px;top:581px"></div>
<div class="rh" style="left:544px;top:581px"></div>
<div class="rh" style="left:654px;top:581px"></div>
<div class="rh" style="left:784px;top:581px"></div>
<div class="rh" style="left:914px;top:581px"></div>
<div class="rh" style="left:984px;top:581px"></div>
<div class="rh" style="left:1054px;top:581px"></div>
<div class="rh" style="left:1184px;top:581px"></div>
<div class="rh" style="left:1344px;top:581px"></div>
<div class="rh" style="left:1464px;top:581px"></div>
<div class="th" style="left:458px;top:548px">Detail</div>
<div class="th" style="left:798px;top:548px">Term</div>
<div class="th" style="left:1198px;top:548px">Base Rent</div>
<div class="th" style="left:1478px;top:548px">Rent Increase</div>
<svg class="abs" style="left:763px;top:548px" width="10" height="10" viewBox="0 0 16 16"><use href="#qm"/></svg>
<svg class="abs" style="left:1163px;top:548px" width="10" height="10" viewBox="0 0 16 16"><use href="#qm"/></svg>
<svg class="abs" style="left:1443px;top:548px" width="10" height="10" viewBox="0 0 16 16"><use href="#qm"/></svg>
<div class="cb" style="left:258px;top:579px"></div>
<div class="th" style="left:285px;top:581px">Tenant Name</div>
<div class="th" style="left:458px;top:581px">Suite</div>
<div class="th" style="left:559px;top:581px">Type</div>
<div class="th" style="left:668px;top:581px">Unit (Area)</div>
<div class="th" style="left:798px;top:581px">Start Date</div>
<div class="th" style="left:928px;top:581px">Years</div>
<div class="th" style="left:998px;top:581px">Months</div>
<div class="th" style="left:1068px;top:581px">End Date</div>
<div class="th" style="left:1198px;top:581px">Method</div>
<div class="th" style="left:1358px;top:581px">Amount</div>
<div class="th" style="left:1478px;top:581px">Method</div>
<svg class="abs" style="left:257px;top:614px" width="10" height="7" viewBox="0 0 10 7"><use href="#dh"/></svg>
<div class="cb" style="left:277px;top:610px"></div>
<div class="td" style="left:299px;top:612px">Keebler-Vandervort</div>
<div class="td" style="left:455px;top:612px">1.02</div>
<div class="td" style="left:555px;top:612px">Office</div>
<svg class="abs" style="left:630px;top:615px" width="8" height="5" viewBox="0 0 8 5"><use href="#chev"/></svg>
<div class="td" style="left:665px;top:612px">10,050</div>
<svg class="abs" style="left:758px;top:613px" width="12" height="8" viewBox="0 0 12 8"><use href="#lst"/></svg>
<div class="td" style="left:795px;top:612px">2017-05-07</div>
<svg class="abs" style="left:888px;top:609px" width="12" height="14" viewBox="0 0 12 14"><use href="#cal"/></svg>
<div class="td" style="left:925px;top:612px">6</div>
<div class="td" style="left:1065px;top:612px;color:#a3a3a3">2023-05-06</div>
<svg class="abs" style="left:1158px;top:609px" width="12" height="14" viewBox="0 0 12 14"><use href="#cal"/></svg>
<div class="td" style="left:1195px;top:612px">Amount/Unit/Month</div>
<svg class="abs" style="left:1320px;top:615px" width="8" height="5" viewBox="0 0 8 5"><use href="#chev"/></svg>
<div class="td" style="left:1355px;top:612px">1.00</div>
<div class="td" style="left:1475px;top:612px;width:82px;overflow:hidden">Amount/Unit/Month</div>
<svg class="abs" style="left:257px;top:644px" width="10" height="7" viewBox="0 0 10 7"><use href="#dh"/></svg>
<div class="cb" style="left:277px;top:640px"></div>
<div class="td" style="left:299px;top:642px">Eichmann, Schuppe an...</div>
<div class="td" style="left:455px;top:642px">2.04</div>
<div class="td" style="left:555px;top:642px">Office</div>
<svg class="abs" style="left:630px;top:645px" width="8" height="5" viewBox="0 0 8 5"><use href="#chev"/></svg>
<div class="td" style="left:665px;top:642px">10,720</div>
<svg class="abs" style="left:758px;top:643px" width="12" height="8" viewBox="0 0 12 8"><use href="#lst"/></svg>
<div class="td" style="left:795px;top:642px">2019-08-19</div>
<svg class="abs" style="left:888px;top:639px" width="12" height="14" viewBox="0 0 12 14"><use href="#cal"/></svg>
<div class="td" style="left:925px;top:642px">6</div>
<div class="td" style="left:1065px;top:642px;color:#a3a3a3">2025-08-18</div>
<svg class="abs" style="left:1158px;top:639px" width="12" height="14" viewBox="0 0 12 14"><use href="#cal"/></svg>
<div class="td" style="left:1195px;top:642px">Amount/Unit/Month</div>
<svg class="abs" style="left:1320px;top:645px" width="8" height="5" viewBox="0 0 8 5"><use href="#chev"/></svg>
<div class="td" style="left:1355px;top:642px">1.00</div>
<div class="td" style="left:1475px;top:642px;width:82px;overflow:hidden">Amount/Unit/Month</div>
<svg class="abs" style="left:257px;top:674px" width="10" height="7" viewBox="0 0 10 7"><use href="#dh"/></svg>
<div class="cb" style="left:277px;top:670px"></div>
<div class="td" style="left:299px;top:672px">Shanahan-Kozey</div>
<div class="td" style="left:455px;top:672px">2.06</div>
<div class="td" style="left:555px;top:672px">Office</div>
<svg class="abs" style="left:630px;top:675px" width="8" height="5" viewBox="0 0 8 5"><use href="#chev"/></svg>
<div class="td" style="left:665px;top:672px">6,700</div>
<svg class="abs" style="left:758px;top:673px" width="12" height="8" viewBox="0 0 12 8"><use href="#lst"/></svg>
<div class="td" style="left:795px;top:672px">2024-02-01</div>
<svg class="abs" style="left:888px;top:669px" width="12" height="14" viewBox="0 0 12 14"><use href="#cal"/></svg>
<div class="td" style="left:925px;top:672px">2</div>
<div class="td" style="left:1065px;top:672px;color:#a3a3a3">2026-01-31</div>
<svg class="abs" style="left:1158px;top:669px" width="12" height="14" viewBox="0 0 12 14"><use href="#cal"/></svg>
<div class="td" style="left:1195px;top:672px">Amount/Unit/Month</div>
<svg class="abs" style="left:1320px;top:675px" width="8" height="5" viewBox="0 0 8 5"><use href="#chev"/></svg>
<div class="td" style="left:1355px;top:672px">1.50</div>
<div class="td" style="left:1475px;top:672px;width:82px;overflow:hidden">Amount/Unit/Month</div>
<svg class="abs" style="left:257px;top:704px" width="10" height="7" viewBox="0 0 10 7"><use href="#dh"/></svg>
<div class="cb" style="left:277px;top:700px"></div>
<div class="td" style="left:299px;top:702px">Koss-DuBuque</div>
<div class="td" style="left:455px;top:702px">3.01</div>
<div class="td" style="left:555px;top:702px">Office</div>
<svg class="abs" style="left:630px;top:705px" width="8" height="5" viewBox="0 0 8 5"><use href="#chev"/></svg>
<div class="td" style="left:665px;top:702px">8,710</div>
<svg class="abs" style="left:758px;top:703px" width="12" height="8" viewBox="0 0 12 8"><use href="#lst"/></svg>
<div class="td" style="left:795px;top:702px">2021-10-26</div>
<svg class="abs" style="left:888px;top:699px" width="12" height="14" viewBox="0 0 12 14"><use href="#cal"/></svg>
<div class="td" style="left:925px;top:702px">3</div>
<div class="td" style="left:1065px;top:702px;color:#a3a3a3">2024-10-25</div>
<svg class="abs" style="left:1158px;top:699px" width="12" height="14" viewBox="0 0 12 14"><use href="#cal"/></svg>
<div class="td" style="left:1195px;top:702px">Amount/Unit/Month</div>
<svg class="abs" style="left:1320px;top:705px" width="8" height="5" viewBox="0 0 8 5"><use href="#chev"/></svg>
<div class="td" style="left:1355px;top:702px">1.26</div>
<div class="td" style="left:1475px;top:702px;width:82px;overflow:hidden">Amount/Unit/Month</div>
<svg class="abs" style="left:257px;top:734px" width="10" height="7" viewBox="0 0 10 7"><use href="#dh"/></svg>
<div class="cb" style="left:277px;top:730px"></div>
<div class="td" style="left:299px;top:732px">O'Kon Inc</div>
<div class="td" style="left:455px;top:732px">3.02</div>
<div class="td" style="left:555px;top:732px">Office</div>
<svg class="abs" style="left:630px;top:735px" width="8" height="5" viewBox="0 0 8 5"><use href="#chev"/></svg>
<div class="td" style="left:665px;top:732px">11,390</div>
<svg class="abs" style="left:758px;top:733px" width="12" height="8" viewBox="0 0 12 8"><use href="#lst"/></svg>
<div class="td" style="left:795px;top:732px">2023-07-04</div>
<svg class="abs" style="left:888px;top:729px" width="12" height="14" viewBox="0 0 12 14"><use href="#cal"/></svg>
<div class="td" style="left:925px;top:732px">3</div>
<div class="td" style="left:1065px;top:732px;color:#a3a3a3">2026-07-03</div>
<svg class="abs" style="left:1158px;top:729px" width="12" height="14" viewBox="0 0 12 14"><use href="#cal"/></svg>
<div class="td" style="left:1195px;top:732px">Amount/Unit/Month</div>
<svg class="abs" style="left:1320px;top:735px" width="8" height="5" viewBox="0 0 8 5"><use href="#chev"/></svg>
<div class="td" style="left:1355px;top:732px">1.20</div>
<div class="td" style="left:1475px;top:732px;width:82px;overflow:hidden">Amount/Unit/Month</div>
<svg class="abs" style="left:257px;top:764px" width="10" height="7" viewBox="0 0 10 7"><use href="#dh"/></svg>
<div class="cb" style="left:277px;top:760px"></div>
<div class="td" style="left:299px;top:762px">Kreiger PLC</div>
<div class="td" style="left:455px;top:762px">4.01</div>
<div class="td" style="left:555px;top:762px">Office</div>
<svg class="abs" style="left:630px;top:765px" width="8" height="5" viewBox="0 0 8 5"><use href="#chev"/></svg>
<div class="td" style="left:665px;top:762px">7,370</div>
<svg class="abs" style="left:758px;top:763px" width="12" height="8" viewBox="0 0 12 8"><use href="#lst"/></svg>
<div class="td" style="left:795px;top:762px">2018-11-24</div>
<svg class="abs" style="left:888px;top:759px" width="12" height="14" viewBox="0 0 12 14"><use href="#cal"/></svg>
<div class="td" style="left:925px;top:762px">8</div>
<div class="td" style="left:1065px;top:762px;color:#a3a3a3">2026-11-23</div>
<svg class="abs" style="left:1158px;top:759px" width="12" height="14" viewBox="0 0 12 14"><use href="#cal"/></svg>
<div class="td" style="left:1195px;top:762px">Amount/Unit/Month</div>
<svg class="abs" style="left:1320px;top:765px" width="8" height="5" viewBox="0 0 8 5"><use href="#chev"/></svg>
<div class="td" style="left:1355px;top:762px">1.10</div>
<div class="td" style="left:1475px;top:762px;width:82px;overflow:hidden">Amount/Unit/Month</div>
<svg class="abs" style="left:257px;top:794px" width="10" height="7" viewBox="0 0 10 7"><use href="#dh"/></svg>
<div class="cb" style="left:277px;top:790px"></div>
<div class="td" style="left:299px;top:792px">Schumm-Parisian</div>
<div class="td" style="left:455px;top:792px">4.03</div>
<div class="td" style="left:555px;top:792px">Office</div>
<svg class="abs" style="left:630px;top:795px" width="8" height="5" viewBox="0 0 8 5"><use href="#chev"/></svg>
<div class="td" style="left:665px;top:792px">12,060</div>
<svg class="abs" style="left:758px;top:793px" width="12" height="8" viewBox="0 0 12 8"><use href="#lst"/></svg>
<div class="td" style="left:795px;top:792px">2023-03-12</div>
<svg class="abs" style="left:888px;top:789px" width="12" height="14" viewBox="0 0 12 14"><use href="#cal"/></svg>
<div class="td" style="left:925px;top:792px">3</div>
<div class="td" style="left:1065px;top:792px;color:#a3a3a3">2026-03-11</div>
<svg class="abs" style="left:1158px;top:789px" width="12" height="14" viewBox="0 0 12 14"><use href="#cal"/></svg>
<div class="td" style="left:1195px;top:792px">Amount/Unit/Month</div>
<svg class="abs" style="left:1320px;top:795px" width="8" height="5" viewBox="0 0 8 5"><use href="#chev"/></svg>
<div class="td" style="left:1355px;top:792px">1.20</div>
<div class="td" style="left:1475px;top:792px;width:82px;overflow:hidden">Amount/Unit/Month</div>
<div class="abs" style="left:266px;top:846px;font-size:11.2px;line-height:13px;font-weight:bold;color:#1e1e1e;letter-spacing:-0.1px">Rows: 7</div>
<div class="abs" style="left:236px;top:913px;width:1331px;height:100px;border:1px solid #ececec;border-radius:4px"></div>
<div class="abs" style="left:251px;top:930px;font-size:14px;line-height:16px;font-weight:bold;color:#1a1a1a;letter-spacing:-0.4px">Speculative Leases</div>
<svg class="abs" style="left:381px;top:932px" width="10" height="10" viewBox="0 0 16 16"><use href="#qm"/></svg>
</body></html>
